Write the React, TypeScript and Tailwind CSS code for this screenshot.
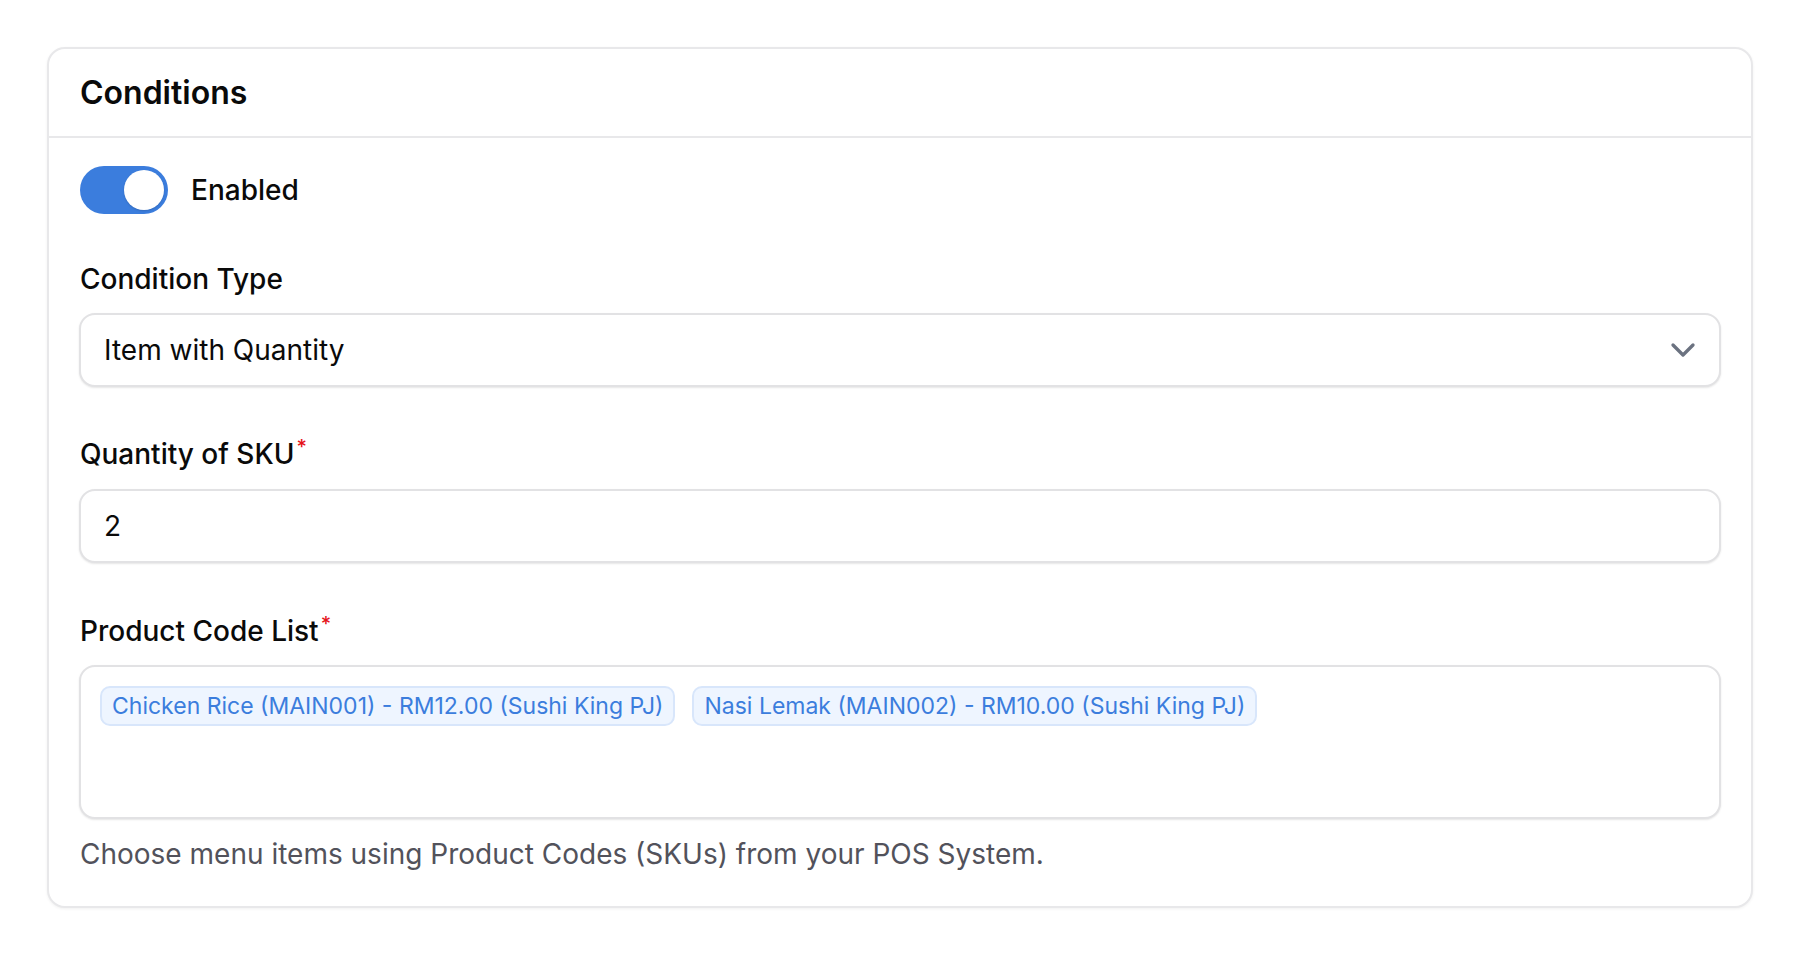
export default function App() {
  return (
    <div className="min-h-screen bg-white p-[47px] font-['Inter','Noto_Sans',sans-serif] text-[#0a0a0a]">
      <div className="rounded-[18px] border-2 border-[#e8e8ea] bg-white shadow-[0_1px_3px_rgba(0,0,0,0.06)]">
        <div className="flex h-[89px] items-center border-b-2 border-[#e8e8ea] px-[31px]">
          <h2 className="text-[32px] font-semibold leading-[40px]">Conditions</h2>
        </div>

        <div className="px-[30px] pb-[32px] pt-[28px]">
          <div className="flex items-center gap-[23px] pl-[1px]">
            <div className="flex h-[48px] w-[88px] items-center justify-end rounded-full bg-[#3b7ddd] p-[4px]">
              <div className="h-[40px] w-[40px] rounded-full bg-white shadow-[0_1px_2px_rgba(0,0,0,0.15)]" />
            </div>
            <span className="text-[28px] font-medium leading-[40px]">Enabled</span>
          </div>

          <div className="mt-[45px]">
            <div className="mb-[14px] pl-[1px] text-[28px] font-medium leading-[40px]">Condition Type</div>
            <div className="flex h-[74px] items-center justify-between rounded-[16px] border-2 border-[#e2e2e4] bg-white pl-[23px] pr-[16px] shadow-[0_1px_2px_rgba(0,0,0,0.1)]">
              <span className="text-[28px] leading-[40px]">Item with Quantity</span>
              <svg width="40" height="40" viewBox="0 0 24 24" fill="none" stroke="#6b7280" strokeWidth="2" strokeLinecap="round" strokeLinejoin="round">
                <path d="m6 9 6 6 6-6" />
              </svg>
            </div>
          </div>

          <div className="mt-[47px]">
            <div className="mb-[15px] pl-[1px] text-[28px] font-medium leading-[40px]">
              Quantity of SKU
              <span className="relative -top-[10px] ml-[2px] text-[20px] leading-none text-[#e5121b]">*</span>
            </div>
            <div className="flex h-[74px] items-center rounded-[16px] border-2 border-[#e2e2e4] bg-white pl-[23px] shadow-[0_1px_2px_rgba(0,0,0,0.1)]">
              <span className="text-[28px] leading-[40px]">2</span>
            </div>
          </div>

          <div className="mt-[48px]">
            <div className="mb-[14px] pl-[1px] text-[28px] font-medium leading-[40px]">
              Product Code List
              <span className="relative -top-[10px] ml-[2px] text-[20px] leading-none text-[#e5121b]">*</span>
            </div>
            <div className="flex h-[154px] flex-wrap content-start items-start gap-[17px] rounded-[16px] border-2 border-[#e2e2e4] bg-white p-[19px] shadow-[0_1px_2px_rgba(0,0,0,0.1)]">
              <span className="h-[40px] rounded-[10px] border-2 border-[#d8e6fb] bg-[#eef5ff] px-[10px] text-[23px] leading-[36px] text-[#3b7ddd]">
                Chicken Rice (MAIN001) - RM12.00 (Sushi King PJ)
              </span>
              <span className="h-[40px] rounded-[10px] border-2 border-[#d8e6fb] bg-[#eef5ff] px-[10px] text-[23px] leading-[36px] text-[#3b7ddd]">
                Nasi Lemak (MAIN002) - RM10.00 (Sushi King PJ)
              </span>
            </div>
          </div>

          <p className="mt-[15px] pl-[1px] text-[28px] leading-[40px] text-[#52525b]">
            Choose menu items using Product Codes (SKUs) from your POS System.
          </p>
        </div>
      </div>
    </div>
  );
}
